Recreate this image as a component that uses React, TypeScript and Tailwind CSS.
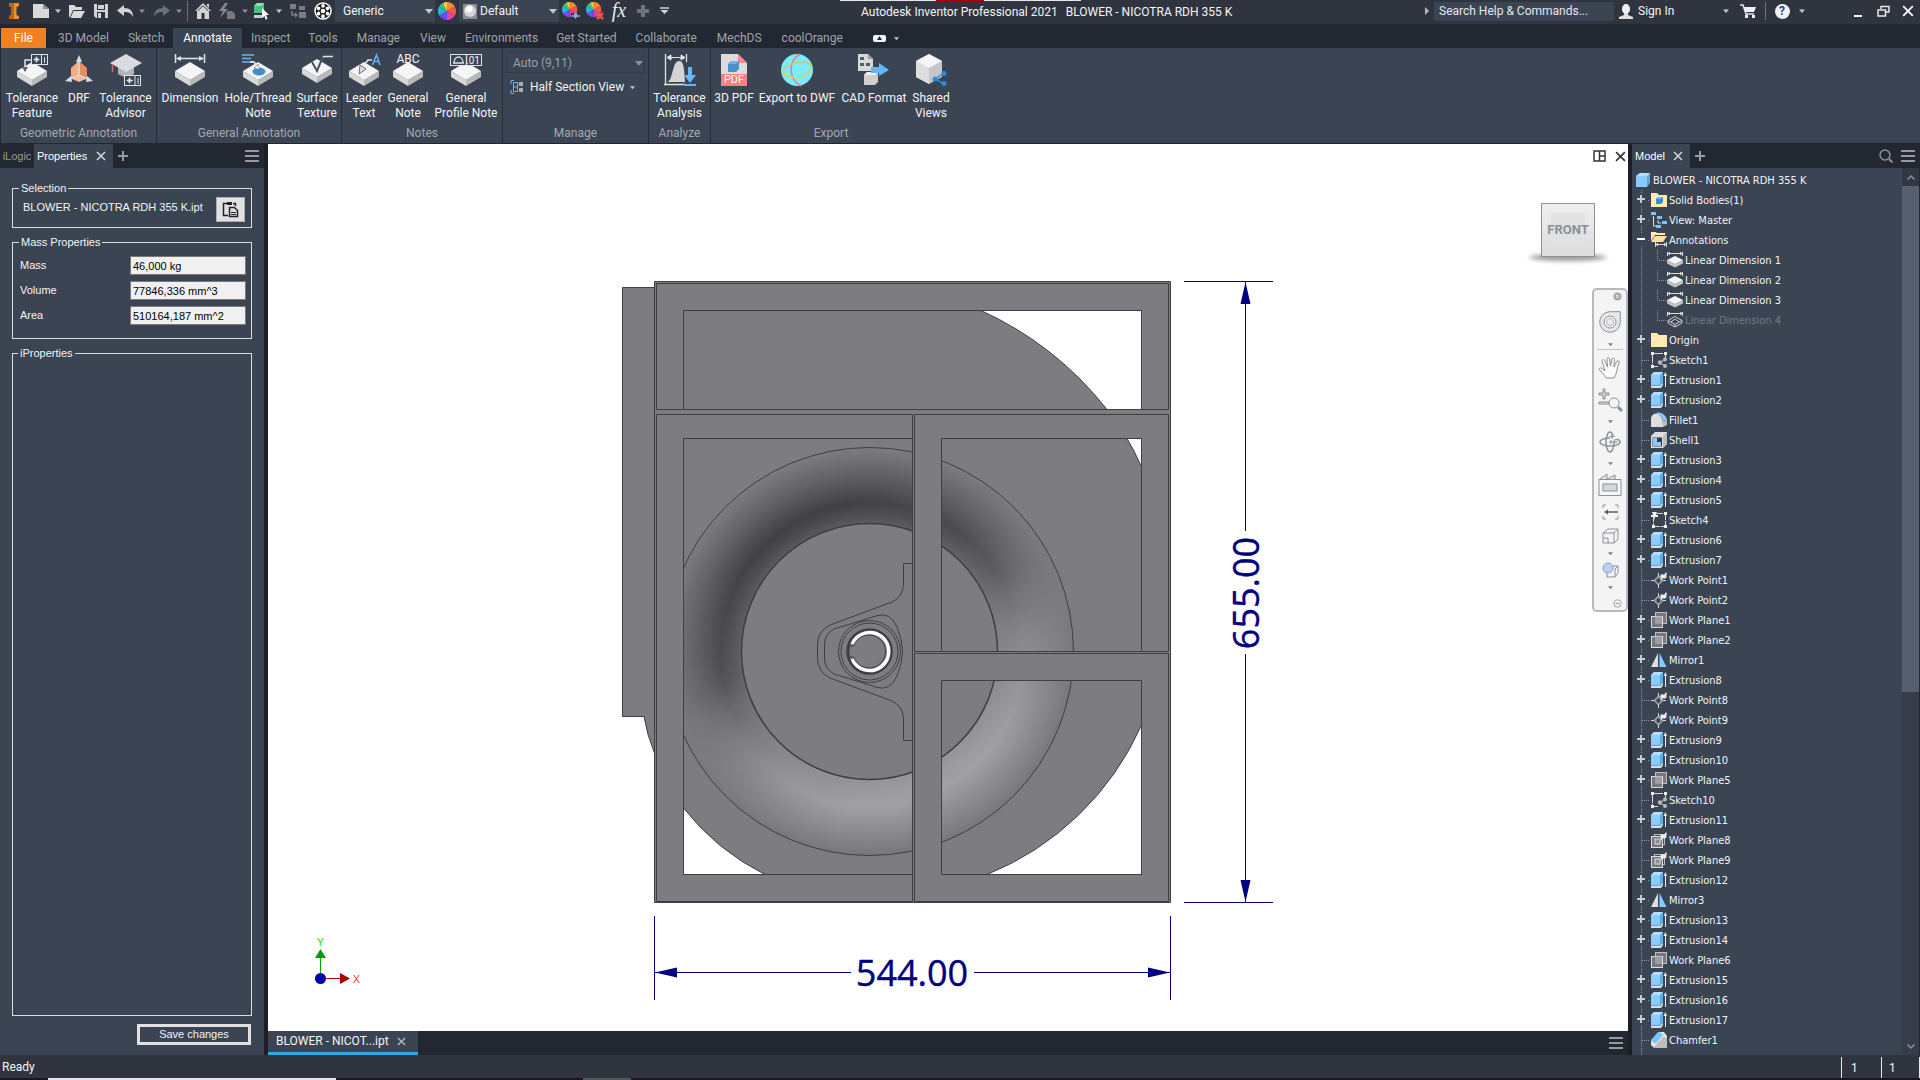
import type { ReactNode } from "react";

const Svg = ({ w = 16, h = 16, children }: { w?: number; h?: number; children: ReactNode }) => (
  <svg width={w} height={h} viewBox={`0 0 ${w} ${h}`} fill="none" className="block shrink-0" aria-hidden="true">
    {children}
  </svg>
);

const Caret = ({ size = 6, color = "#c3c8d0" }: { size?: number; color?: string }) => (
  <svg width={size} height={size} viewBox="0 0 6 6" className="block shrink-0" aria-hidden="true">
    <path d="M0 1.5H6L3 5Z" fill={color} />
  </svg>
);

const Burger = () => (
  <Svg w={14} h={12}>
    <path d="M0 1H14M0 6H14M0 11H14" stroke="#9a9a9e" strokeWidth="2" />
  </Svg>
);

const Cross = ({ color = "#d5d8dc", s = 10 }: { color?: string; s?: number }) => (
  <svg width={s} height={s} viewBox="0 0 10 10" className="block" aria-hidden="true">
    <path d="M1 1L9 9M9 1L1 9" stroke={color} strokeWidth="1.5" />
  </svg>
);

const Plus = ({ color = "#9a9a9e" }: { color?: string }) => (
  <Svg w={10} h={10}>
    <path d="M5 0V10M0 5H10" stroke={color} strokeWidth="2" />
  </Svg>
);

/* ---------- title bar icons ---------- */

const wheelSlices = (
  <>
    <path d="M9 9V0A9 9 0 0 1 16.8 4.5Z" fill="#ff8a2b" />
    <path d="M9 9L16.8 4.5A9 9 0 0 1 16.8 13.5Z" fill="#f2564f" />
    <path d="M9 9L16.8 13.5A9 9 0 0 1 9 18Z" fill="#e23fa0" />
    <path d="M9 9V18A9 9 0 0 1 1.2 13.5Z" fill="#6a4df0" />
    <path d="M9 9L1.2 13.5A9 9 0 0 1 1.2 4.5Z" fill="#2bb0d8" />
    <path d="M9 9L1.2 4.5A9 9 0 0 1 5 1Z" fill="#38c878" />
    <path d="M9 9L5 1A9 9 0 0 1 9 0Z" fill="#ffd23c" />
  </>
);

const titleIcons: Record<string, ReactNode> = {
  logo: (
    <Svg w={12} h={16}>
      <path d="M1 0H11V3L8.5 4V12L11 13V16H1V13L3.5 12V4L1 3Z" fill="#e8912d" />
      <path d="M1 0H6V16H1V13L3.5 12V4L1 3Z" fill="#b9681a" />
    </Svg>
  ),
  new: (
    <Svg>
      <path d="M0 1H10L16 6V15H0Z" fill="#d9d9d9" />
      <path d="M10 1V6H16Z" fill="#8d9097" />
    </Svg>
  ),
  open: (
    <Svg w={17}>
      <path d="M1 2H6L8 4H14V7H5L2 14H1Z" fill="#d9d9d9" />
      <path d="M5.500 8H17L13 15H2.500Z" fill="#d9d9d9" />
    </Svg>
  ),
  save: (
    <Svg w={14}>
      <path d="M0 1H14V15H2L0 13Z" fill="#d0d2d5" />
      <path d="M3 1H11V7H3ZM3 9H11V15H3Z" fill="#2f343f" />
      <path d="M4 2H10V6H4ZM4 10H7V15H4Z" fill="#d0d2d5" />
    </Svg>
  ),
  undo: (
    <Svg w={17}>
      <path d="M7 2V5C13 5 16 8 16 14C14 10 12 9 7 9V13L0 7.500Z" fill="#d4d4d4" />
    </Svg>
  ),
  redo: (
    <Svg w={17}>
      <path d="M10 2V5C4 5 1 8 1 14C3 10 5 9 10 9V13L17 7.500Z" fill="#6c7077" />
    </Svg>
  ),
  home: (
    <Svg>
      <path d="M8 0L16 8H14V16H9.500V10H6.500V16H2V8H0Z" fill="#d4d4d4" />
      <path d="M12 1H14V5L12 3Z" fill="#d4d4d4" />
      <path d="M2.500 8L8 2.800L13.500 8" stroke="#2f343f" />
    </Svg>
  ),
  bolt: (
    <Svg w={17}>
      <path d="M6 0L0 8H4L1 15L9 6H5L9 0Z" fill="#85888e" />
      <path d="M8 8H13L16 11V16H8Z" fill="#777a80" />
    </Svg>
  ),
  pick: (
    <Svg w={16} h={18}>
      <path d="M0 4L3 1H10V8L8 11H0Z" fill="#4cbf7c" />
      <path d="M0 4L3 1H10L8 4Z" fill="#8be0ad" />
      <path d="M0 13H8L10 11V14L8 16H0Z" fill="#c9ccd0" />
      <path d="M8 6L15 13H12L13.500 17L11.500 17.500L10.500 14L8 16Z" fill="#fff" />
    </Svg>
  ),
  link: (
    <Svg w={17}>
      <path d="M1 1H7V6H1ZM10 3H16V7H10ZM10 9H17V15H10Z" fill="#7b7e85" />
      <path d="M3 8V12H8M6 10L8 12L6 14" stroke="#7b7e85" strokeWidth="1.500" />
    </Svg>
  ),
  ball: (
    <Svg w={18} h={18}>
      <circle cx="9" cy="9" r="8" fill="#111" stroke="#fff" strokeWidth="1.500" />
      <circle cx="9" cy="9" r="2.300" fill="#fff" />
      {[0, 60, 120, 180, 240, 300].map((a) => (
        <circle key={a} cx="9" cy="3.800" r="1.900" fill="#fff" transform={`rotate(${a} 9 9)`} />
      ))}
    </Svg>
  ),
  wheel: (
    <Svg w={18} h={18}>
      {wheelSlices}
    </Svg>
  ),
  wheelAdd: (
    <Svg w={18} h={18}>
      <g transform="scale(.85)">{wheelSlices}</g>
      <path d="M9 11H18V18H9Z" fill="#2f343f" />
      <path d="M9.500 14H18" stroke="#d9e6f2" />
      <path d="M12 11H15V15L13.500 17L12 15Z" fill="#63b8f5" />
    </Svg>
  ),
  wheelClear: (
    <Svg w={18} h={18}>
      <g transform="scale(.85)">{wheelSlices}</g>
      <path d="M11 11L17 17M17 11L11 17" stroke="#f05252" strokeWidth="2.500" />
    </Svg>
  ),
  plus: (
    <Svg w={12} h={12}>
      <path d="M6 0V12M0 6H12" stroke="#6f737b" strokeWidth="4" />
    </Svg>
  ),
  more: (
    <Svg w={9} h={8}>
      <path d="M0 1H9" stroke="#d0d3d8" strokeWidth="1.500" />
      <path d="M0.500 3H8.500L4.500 7Z" fill="#d0d3d8" />
    </Svg>
  ),
};

const IconButton = ({ label, className, children }: { label: string; className: string; children: ReactNode }) => (
  <button type="button" aria-label={label} className={`flex h-full shrink-0 items-center justify-center ${className}`}>
    {children}
  </button>
);

const TitleSelect = ({ label, value, icon }: { label: string; value: string; icon?: ReactNode }) => (
  <div className="relative flex h-[22px] w-[100px] shrink-0 items-center bg-[#3b4453]">
    {icon && <span className="ml-1">{icon}</span>}
    <select aria-label={label} className={`h-full w-full min-w-0 appearance-none bg-transparent text-[12px] text-gray-100 ${icon ? "pl-[3px]" : "pl-2"}`}>
      <option>{value}</option>
    </select>
    <span className="pointer-events-none absolute right-[2px]">
      <Caret size={8} />
    </span>
  </div>
);

const TitleBar = () => (
  <header className="flex h-6 items-start bg-[#2f343f]">
    <div className="flex h-[22px] shrink-0 items-center">
      <IconButton label="Application menu" className="w-7">{titleIcons.logo}</IconButton>
      <IconButton label="New" className="w-[26px]">{titleIcons.new}</IconButton>
      <IconButton label="New options" className="w-2"><Caret /></IconButton>
      <IconButton label="Open" className="w-7">{titleIcons.open}</IconButton>
      <IconButton label="Save" className="w-[22px]">{titleIcons.save}</IconButton>
      <IconButton label="Undo" className="w-[26px]">{titleIcons.undo}</IconButton>
      <IconButton label="Undo options" className="w-2"><Caret color="#8b9098" /></IconButton>
      <IconButton label="Redo" className="w-[30px]">{titleIcons.redo}</IconButton>
      <IconButton label="Redo options" className="w-[6px]"><Caret color="#8b9098" /></IconButton>
      <div className="mx-[5px] h-5 w-px bg-[#6b7079]" />
      <IconButton label="Home" className="w-5">{titleIcons.home}</IconButton>
      <IconButton label="Update" className="w-7">{titleIcons.bolt}</IconButton>
      <IconButton label="Update options" className="w-2"><Caret color="#8b9098" /></IconButton>
      <IconButton label="Select" className="w-[26px]">{titleIcons.pick}</IconButton>
      <IconButton label="Select options" className="w-2"><Caret /></IconButton>
      <IconButton label="Return" className="w-7">{titleIcons.link}</IconButton>
      <IconButton label="Material browser" className="w-6">{titleIcons.ball}</IconButton>
      <TitleSelect label="Material" value="Generic" />
      <IconButton label="Appearance browser" className="w-6">{titleIcons.wheel}</IconButton>
      <TitleSelect
        label="Appearance"
        value="Default"
        icon={
          <Svg w={14} h={15}>
            <rect width="14" height="15" fill="#8b8e93" />
            <circle cx="7" cy="7" r="6" fill="#d5d5d5" />
            <circle cx="6" cy="5" r="3.500" fill="#fafafa" />
          </Svg>
        }
      />
      <IconButton label="Adjust appearance" className="w-6">{titleIcons.wheelAdd}</IconButton>
      <IconButton label="Clear appearance" className="w-6">{titleIcons.wheelClear}</IconButton>
      <IconButton label="Parameters" className="w-6 pb-[2px] font-['Liberation_Serif',serif] text-[20px] leading-none text-gray-200 italic">fx</IconButton>
      <IconButton label="Add command" className="w-6">{titleIcons.plus}</IconButton>
      <IconButton label="Customize toolbar" className="w-[18px]">{titleIcons.more}</IconButton>
    </div>
    <div className="flex min-w-0 flex-1 flex-col">
      <div className="ml-[167px] flex h-px w-[241px] bg-gray-200">
        <span className="ml-24 w-12 bg-[#b50000]" />
      </div>
      <h1 className="ml-[188px] flex h-[22px] items-center gap-[8px] text-[12px] whitespace-nowrap text-gray-100">
        <span>Autodesk Inventor Professional 2021</span>
        <span>BLOWER - NICOTRA RDH 355 K</span>
      </h1>
    </div>
    <div className="flex h-[22px] shrink-0 items-center">
      <IconButton label="Expand search" className="w-[14px]">
        <Svg w={4} h={8}><path d="M0 0L4 4L0 8Z" fill="#b5bac2" /></Svg>
      </IconButton>
      <input aria-label="Search" placeholder="Search Help &amp; Commands..." className="h-[19px] w-[180px] bg-[#3b4453] px-[5px] text-[12px] text-gray-100 placeholder:text-gray-200" />
      <button type="button" className="flex h-full items-center text-[12px] text-gray-100">
        <span className="mx-[5px]">
          <Svg w={14} h={15}>
            <ellipse cx="7" cy="5" rx="4" ry="5" fill="#f0f0f0" />
            <path d="M5 9H9V11L14 13V15H0V13L5 11Z" fill="#e0e0e0" />
          </Svg>
        </span>
        <span className="w-[85px] text-left">Sign In</span>
        <span className="mr-[2px]"><Caret /></span>
      </button>
      <IconButton label="App store" className="w-[34px]">
        <Svg w={17} h={15}>
          <path d="M0 1H3L6 10H14" stroke="#dfe3f5" strokeWidth="1.500" />
          <path d="M4 3H16L14 8H5.500Z" fill="#eceffc" />
          <path d="M5 11H8V14H5ZM12 11H15V14H12Z" fill="#eceffc" />
        </Svg>
      </IconButton>
      <div className="h-[18px] w-px bg-[#6b7079]" />
      <IconButton label="Help" className="w-8">
        <span className="flex size-[15px] items-center justify-center rounded-full bg-gray-100 text-[12px] font-bold text-[#1d3f9c]">?</span>
      </IconButton>
      <IconButton label="Help options" className="mr-10 w-2"><Caret /></IconButton>
      <IconButton label="Minimize" className="w-6">
        <Svg w={8} h={12}><path d="M0 11H8" stroke="#fff" strokeWidth="2" /></Svg>
      </IconButton>
      <IconButton label="Restore" className="w-[26px]">
        <Svg w={13} h={12}>
          <path d="M4 4V1.500H12V7H9M1 5H8.500V11H1Z" stroke="#e8e8e8" strokeWidth="1.500" />
        </Svg>
      </IconButton>
      <IconButton label="Close" className="w-6"><Cross color="#fff" s={12} /></IconButton>
    </div>
  </header>
);

/* ---------- ribbon ---------- */

const tabs: [string, string][] = [
  ["3D Model", "px-[10px]"],
  ["Sketch", "px-[9px]"],
  ["Annotate", "px-[10px] bg-[#3b4453] text-white"],
  ["Inspect", "px-[9px]"],
  ["Tools", "px-[9px]"],
  ["Manage", "px-[10px]"],
  ["View", "px-[10px]"],
  ["Environments", "px-[9px]"],
  ["Get Started", "px-[9px]"],
  ["Collaborate", "px-[10px]"],
  ["MechDS", "px-[10px]"],
  ["coolOrange", "px-[10px]"],
];

const RibbonTabs = () => (
  <nav className="flex h-6 items-end bg-[#222831] text-[12px] text-[#a0a4aa]">
    <button type="button" className="mr-[2px] ml-px h-5 w-[45px] bg-[#ef8122] text-white">File</button>
    {tabs.map(([name, style]) => (
      <button key={name} type="button" className={`h-5 whitespace-nowrap ${style}`}>
        {name}
      </button>
    ))}
    <button type="button" aria-label="Ribbon display" className="ml-5 flex h-5 items-center gap-2">
      <span className="flex h-[7px] w-[13px] items-center justify-center rounded-[2px] bg-gray-100">
        <Svg w={5} h={4}><path d="M0 4H5L2.500 0Z" fill="#222831" /></Svg>
      </span>
      <Caret size={5} />
    </button>
  </nav>
);

const Slab = () => (
  <>
    <path d="M1 17L16 26V32L1 23Z" fill="#d8d8d8" />
    <path d="M31 17L16 26V32L31 23Z" fill="#b9b9b9" />
    <path d="M16 8L31 17L16 26L1 17Z" fill="#f5f5f5" />
  </>
);

const ribbonIcons: Record<string, ReactNode> = {
  feature: (
    <>
      <Slab />
      <path d="M9 16V6H15" stroke="#dfe3e8" strokeWidth="1.500" />
      <path d="M6 13H12L9 18Z" fill="#5b6069" />
      <rect x="15.500" y=".5" width="16" height="10" fill="#3b4453" stroke="#dfe3e8" />
      <path d="M25.500 1V10M28.500 3V9M17.500 5.500H23.500M20.500 2.500V8.500" stroke="#dfe3e8" />
      <circle cx="20.500" cy="5.500" r="1.700" stroke="#dfe3e8" />
    </>
  ),
  drf: (
    <>
      <path d="M8 14L16 7L24 14V24L16 20L8 24Z" fill="#e98e5e" />
      <path d="M16 7V20L8 24V14Z" fill="#f9ad7f" />
      <path d="M9 25L16 21L23 25L16 28Z" fill="#f8ba91" />
      <path d="M16 5V21L5 26M16 21L27 26" stroke="#d9dde2" strokeWidth="1.500" />
      <path d="M13 8H19L16 1ZM8 22L2 27L9 28ZM24 22L30 27L23 28Z" fill="#d9dde2" />
    </>
  ),
  advisor: (
    <>
      <path d="M8 12V20L16 24L24 20V12Z" fill="#b0b3b8" />
      <path d="M16 0L32 9L16 18L0 9Z" fill="#d9dbde" />
      <path d="M2.500 11V18" stroke="#e56a6a" strokeWidth="1.500" />
      <rect x="14.500" y="21.500" width="16" height="10" fill="#3b4453" stroke="#dfe3e8" />
      <path d="M25 22V31M28 24V30M16.500 26.500H23M19.500 23.500V29.500" stroke="#dfe3e8" />
      <circle cx="19.500" cy="26.500" r="1.700" stroke="#dfe3e8" />
    </>
  ),
  dimension: (
    <>
      <Slab />
      <path d="M1.500 0V9M30.500 0V9M3 4.500H29" stroke="#dfe3e8" strokeWidth="1.500" />
      <path d="M2 4.500L7 2V7ZM30 4.500L25 2V7Z" fill="#dfe3e8" />
    </>
  ),
  hole: (
    <>
      <Slab />
      <ellipse cx="17" cy="17.500" rx="6.500" ry="4" fill="#3d8ed0" />
      <path d="M0 1H12M0 4.500H9M0 8H12" stroke="#65b5f3" strokeWidth="1.500" />
      <path d="M8 8H12L17 14" stroke="#eef1f4" strokeWidth="1.500" />
      <path d="M18 16L12 14L16 10Z" fill="#eef1f4" stroke="#444" strokeWidth=".5" />
    </>
  ),
  surface: (
    <>
      <g transform="translate(0 -3)"><Slab /></g>
      <path d="M11 8L16 17L22 2.500H31" stroke="#4b505a" strokeWidth="2" />
      <path d="M22 3L23 2.500H32" stroke="#dfe3e8" strokeWidth="1.500" />
    </>
  ),
  leader: (
    <>
      <Slab />
      <path d="M12 17L20 6H24" stroke="#dfe3e8" strokeWidth="1.500" />
      <path d="M11 20L12 11L18 15Z" fill="#d7d9dc" stroke="#555" strokeWidth=".8" />
      <path d="M24.500 11L28.500 1L32 11M26 7.500H31" stroke="#65b5f3" strokeWidth="1.500" />
    </>
  ),
  abc: <Slab />,
  profile: (
    <>
      <Slab />
      <rect x=".5" y=".5" width="31" height="11" fill="#3b4453" stroke="#dfe3e8" />
      <path d="M16.500 1V11M3 9H14M4 9C4 1 13 1 13 9" stroke="#dfe3e8" strokeWidth="1.300" />
    </>
  ),
  analysis: (
    <>
      <path d="M1.500 0V30M22.500 0V8M0 30.500H22" stroke="#dfe3e8" strokeWidth="1.300" />
      <path d="M3 3.500H21M3 3.500L7 1V6ZM21 3.500L17 1V6Z" fill="#dfe3e8" stroke="#dfe3e8" />
      <path d="M3 28C9 28 8 7 15 7C20 7 20 14 21 28Z" fill="#d4d4d6" />
      <path d="M24 13H28V21H32L26 29L20 21H24ZM20 30H32V32H20Z" fill="#62b8f8" />
    </>
  ),
  pdf: (
    <>
      <path d="M3 0H20L29 9V20H3Z" fill="#dcdcdc" />
      <path d="M20 0L29 9H20Z" fill="#f58a8d" />
      <path d="M10 10L13 7H21V15L18 18H10Z" fill="#4a90cc" />
      <path d="M10 10L13 7H21L18 10Z" fill="#6fb4ea" />
      <path d="M3 20H29V32H3Z" fill="#f78084" />
    </>
  ),
  dwf: (
    <>
      <circle cx="16" cy="16" r="16" fill="#7cebfb" />
      <path d="M19 0C7 7 7 25 20 32" stroke="#ef7c77" strokeWidth="1.500" />
      <path d="M1 18C8 7 24 5 31 12" stroke="#c9c97f" strokeWidth="1.500" />
      <path d="M1 17C8 26 25 27 31 13" stroke="#eccb4c" strokeWidth="1.500" />
    </>
  ),
  cad: (
    <>
      <path d="M0 0H10L15 5V17H0Z" fill="#d9d9d9" />
      <path d="M10 0V5H15Z" fill="#9b9ea3" />
      <path d="M2 3H6V6H2ZM2 9H6V12H2ZM8 9H12V12H8Z" fill="#555a63" />
      <path d="M6 21L9 18H20V28L17 31H6Z" fill="#cfcfcf" />
      <path d="M6 21L9 18H20L17 21Z" fill="#f0f0f0" />
      <path d="M13 13H21V9L31 16L21 22V19H13Z" fill="#62b8f8" />
    </>
  ),
  shared: (
    <>
      <path d="M1 7L14 0L27 7V23L14 30L1 23Z" fill="#c6c6c6" />
      <path d="M1 7L14 14V30L1 23Z" fill="#dedede" />
      <path d="M1 7L14 0L27 7L14 14Z" fill="#f5f5f5" />
      <path d="M29 19L20 25L29 30" stroke="#2a8ae2" strokeWidth="1.500" />
      <circle cx="29" cy="19.500" r="2.500" fill="#2a8ae2" />
      <circle cx="20" cy="25" r="2.500" fill="#2a8ae2" />
      <circle cx="29" cy="29.500" r="2.500" fill="#2a8ae2" />
    </>
  ),
};

type Tool = { icon: string; lines: string[]; w: string };

const ToolButton = ({ icon, lines, w }: Tool) => (
  <button type="button" className={`flex shrink-0 flex-col items-center text-[12px] leading-[15px] whitespace-nowrap text-gray-100 ${w}`}>
    <span className="relative mb-[5px]">
      <svg width="32" height="32" viewBox="0 0 32 32" fill="none" className="block overflow-visible" aria-hidden="true">{ribbonIcons[icon]}</svg>
      {icon === "abc" && <span className="absolute inset-x-0 -top-px text-center text-[12px] leading-[13px]">ABC</span>}
      {icon === "profile" && <span className="absolute top-px right-[2px] text-[10px] leading-[11px]">.01</span>}
      {icon === "pdf" && <span className="absolute inset-x-0 bottom-0 text-center text-[11px] leading-[12px]">PDF</span>}
    </span>
    {lines.map((l) => <span key={l}>{l}</span>)}
  </button>
);

const Group = ({ title, children }: { title: string; children: ReactNode }) => (
  <section aria-label={title} className="flex shrink-0 flex-col border-r border-[#262c37]">
    <div className="flex h-[76px] pt-[6px]">{children}</div>
    <div className="text-center text-[12px] leading-[18px] text-[#a3a8b0]">{title}</div>
  </section>
);

const Ribbon = () => (
  <div className="flex h-24 border-b border-l border-[#222831] bg-[#3b4453]">
    <Group title="Geometric Annotation">
      <ToolButton icon="feature" lines={["Tolerance", "Feature"]} w="w-[62px]" />
      <ToolButton icon="drf" lines={["DRF"]} w="w-8" />
      <ToolButton icon="advisor" lines={["Tolerance", "Advisor"]} w="w-[61px]" />
    </Group>
    <Group title="General Annotation">
      <ToolButton icon="dimension" lines={["Dimension"]} w="w-[66px]" />
      <ToolButton icon="hole" lines={["Hole/Thread", "Note"]} w="w-[70px]" />
      <ToolButton icon="surface" lines={["Surface", "Texture"]} w="w-12" />
    </Group>
    <Group title="Notes">
      <ToolButton icon="leader" lines={["Leader", "Text"]} w="w-11" />
      <ToolButton icon="abc" lines={["General", "Note"]} w="w-11" />
      <ToolButton icon="profile" lines={["General", "Profile Note"]} w="w-[72px]" />
    </Group>
    <Group title="Manage">
      <div className="flex w-[145px] flex-col px-[3px] -mt-[2px]">
        <div className="relative flex h-[21px] items-center border border-[#323945] bg-[#3c4453]">
          <select aria-label="Tolerance range" className="h-full w-full appearance-none bg-transparent pl-[6px] text-[12px] text-[#9aa0a9]">
            <option>Auto (9,11)</option>
          </select>
          <span className="pointer-events-none absolute right-px"><Caret size={8} color="#8b919b" /></span>
        </div>
        <button type="button" className="mt-[3px] flex h-[22px] items-center gap-[6px] pl-1 text-[12px] text-gray-100">
          <Svg w={14} h={14}>
            <path d="M4 .5H1V4M1 10V13.500H4" stroke="#65b5f3" />
            <path d="M3.500 2.500H7.500V11.500H3.500ZM3.500 7H7.500" stroke="#65b5f3" />
            <path d="M9 2H13V6H9ZM9 8H13V12H9Z" fill="#a9adb4" />
          </Svg>
          <span>Half Section View</span>
          <Caret size={5} />
        </button>
      </div>
    </Group>
    <Group title="Analyze">
      <ToolButton icon="analysis" lines={["Tolerance", "Analysis"]} w="w-[61px]" />
    </Group>
    <section aria-label="Export" className="flex flex-col">
      <div className="flex h-[76px] pt-[6px]">
        <ToolButton icon="pdf" lines={["3D PDF"]} w="w-[46px]" />
        <ToolButton icon="dwf" lines={["Export to DWF"]} w="w-20" />
        <ToolButton icon="cad" lines={["CAD Format"]} w="w-[74px]" />
        <ToolButton icon="shared" lines={["Shared", "Views"]} w="w-10" />
      </div>
      <div className="text-center text-[12px] leading-[18px] text-[#a3a8b0]">Export</div>
    </section>
  </div>
);

/* ---------- properties panel ---------- */

const massProps = [
  { id: "mass", label: "Mass", value: "46,000 kg" },
  { id: "volume", label: "Volume", value: "77846,336 mm^3" },
  { id: "area", label: "Area", value: "510164,187 mm^2" },
];

const PropertiesPanel = () => (
  <aside className="flex w-[268px] shrink-0 flex-col border-r-4 border-[#1b2028] bg-[#3b4453] font-['Liberation_Sans',sans-serif] text-[11px] text-gray-100">
    <div className="flex h-6 items-center bg-[#222831]">
      <button type="button" className="w-[34px] text-[#9a9a94]">iLogic</button>
      <div className="flex h-full w-[79px] items-center justify-between bg-[#3b4453] pr-[7px] pl-[3px]">
        <button type="button" className="text-white">Properties</button>
        <button type="button" aria-label="Close Properties"><Cross /></button>
      </div>
      <button type="button" aria-label="Add panel" className="ml-[5px]"><Plus /></button>
      <button type="button" aria-label="Panel menu" className="mr-[5px] ml-auto"><Burger /></button>
    </div>
    <div className="flex flex-1 flex-col gap-[7px] px-3 pt-[13px] pb-[10px]">
      <fieldset className="h-[47px] border border-[#dcdcdc]">
        <legend className="ml-[6px] px-[2px] leading-[14px]">Selection</legend>
        <div className="flex items-start justify-between pt-px pr-[6px] pl-[10px]">
          <span className="leading-[22px]">BLOWER - NICOTRA RDH 355 K.ipt</span>
          <button type="button" aria-label="Paste" className="mt-px flex h-[25px] w-[29px] items-center justify-center border border-[#adadad] bg-[#e1e1e1]">
            <Svg w={17} h={17}>
              <path d="M5 2.500H1.500V14.500H6M11 2.500H13.500V5" stroke="#222" strokeWidth="1.500" />
              <path d="M5 1H10V4H5Z" fill="#222" />
              <path d="M7.500 6.500H12.500L15.500 9.500V15.500H7.500Z" stroke="#222" strokeWidth="1.500" />
              <path d="M9 11.500H14M9 13.500H14" stroke="#222" />
            </Svg>
          </button>
        </div>
      </fieldset>
      <fieldset className="h-[104px] border border-[#dcdcdc]">
        <legend className="ml-[6px] px-[2px] leading-[14px]">Mass Properties</legend>
        <div className="flex flex-col gap-[6px] pt-[7px] pr-[5px] pl-[7px]">
          {massProps.map((p) => (
            <div key={p.id} className="flex items-center justify-between">
              <label htmlFor={p.id}>{p.label}</label>
              <input id={p.id} readOnly defaultValue={p.value} className="h-[19px] w-[116px] border border-[#7a7a7a] bg-[#f0f0f0] px-[2px] text-black" />
            </div>
          ))}
        </div>
      </fieldset>
      <fieldset className="flex-1 border border-[#dcdcdc]">
        <legend className="ml-[5px] px-[2px] leading-[14px]">iProperties</legend>
      </fieldset>
      <button type="button" className="mt-px mr-px h-[21px] w-[114px] self-end border-[3px] border-[#e1e1e1] leading-none">Save changes</button>
    </div>
  </aside>
);

/* ---------- viewport ---------- */

const Drawing = () => {
  const edge = "#3f3f41";
  const body = "#7d7c80";
  return (
    <svg viewBox="268 144 1360 887" className="block h-full w-full" role="img" aria-label="Front view of blower">
      <defs>
        <radialGradient id="dark" gradientUnits="userSpaceOnUse" cx="869.5" cy="651.5" r="204">
          <stop offset=".62" stopColor="#5a5a62" />
          <stop offset=".67" stopColor="#4c4c50" />
          <stop offset=".73" stopColor="#414143" />
          <stop offset=".86" stopColor="#606062" />
          <stop offset="1" stopColor={body} />
        </radialGradient>
        <radialGradient id="light" gradientUnits="userSpaceOnUse" cx="869.5" cy="651.5" r="204">
          <stop offset=".62" stopColor="#96969a" />
          <stop offset=".76" stopColor="#a1a1a5" />
          <stop offset=".88" stopColor="#8c8c8f" />
          <stop offset="1" stopColor="#78787a" />
        </radialGradient>
        <linearGradient id="fadeDark" gradientUnits="userSpaceOnUse" x1="785" y1="505" x2="900" y2="730">
          <stop offset=".1" stopColor="#fff" />
          <stop offset=".45" stopColor="#c4c4c4" />
          <stop offset=".7" stopColor="#666" />
          <stop offset="1" stopColor="#000" />
        </linearGradient>
        <linearGradient id="fadeLight" gradientUnits="userSpaceOnUse" x1="850" y1="630" x2="920" y2="800">
          <stop offset="0" stopColor="#000" />
          <stop offset=".9" stopColor="#fff" />
        </linearGradient>
        <mask id="mDark"><rect x="600" y="400" width="560" height="500" fill="url(#fadeDark)" /></mask>
        <mask id="mLight"><rect x="600" y="400" width="560" height="500" fill="url(#fadeLight)" /></mask>
        <clipPath id="windows">
          <path d="M683 438H913V874H683ZM941 438H1141V652H941ZM941 680H1141V874H941Z" />
        </clipPath>
      </defs>

      <path d="M654.500 281H1170V903H654.500V753Q647 735 644 717H622.500V287.500H654.500Z" fill={body} />
      <g fill="#fff" stroke={edge}>
        <path d="M981 310.500A340 340 0 0 1 1107 409.500H1141.500V310.500Z" />
        <path d="M1127 438.500L1134 451L1141.500 467V438.500Z" />
        <path d="M683.500 808A240 240 0 0 0 765 874.500H683.500Z" />
        <path d="M1141.500 725A286 286 0 0 1 987 874.500H1141.500Z" />
      </g>
      <g clipPath="url(#windows)">
        <circle cx="869.500" cy="651.500" r="204" fill="url(#dark)" mask="url(#mDark)" />
        <circle cx="869.500" cy="651.500" r="204" fill="url(#light)" mask="url(#mLight)" />
        <circle cx="869.500" cy="651.500" r="204" fill="none" stroke={edge} />
        <circle cx="869.500" cy="651.500" r="128" fill={body} stroke={edge} strokeWidth="1.500" />
      </g>
      <g fill="none" stroke={edge}>
        <path d="M913 563.500H903.500V584Q903 597 892 602L830 625Q817.500 631 817.500 645V658Q817.500 672 830 678L892 701Q903 706 903.500 719V740.500H913" />
        <path d="M824.500 645Q824.500 634 834 629L876 616Q890 611 897 627Q902.500 640 902.500 651.500T897 676Q890 692 876 687L834 674Q824.500 669 824.500 658Z" />
        <circle cx="869.500" cy="651.500" r="31" />
        <circle cx="869.500" cy="651.500" r="28.500" />
        <circle cx="869.500" cy="651.500" r="22" strokeWidth="2.500" />
      </g>
      <path d="M852.300 644A19 19 0 1 1 852.300 659" fill="none" stroke="#fff" strokeWidth="3.500" />
      <path d="M853.500 646A16.500 16.500 0 1 1 853.500 657H849V646Z" fill="none" stroke={edge} />

      <g fill="none" stroke={edge}>
        <path d="M654.500 287.500H622.500V716.500H644Q647 735 654.500 753" />
        <path d="M654.500 281.500H1170.500V902.500H654.500Z" />
        <path d="M656.500 283.500H1168.500V409.500H656.500ZM683.500 409V310.500H1141.500V409" />
        <path d="M912.500 414.500H656.500V901.500H912.500M912.500 438.500H683.500V874.500H912.500" />
        <path d="M912.500 414.500V901.500M914.500 414.500H1168.500V651.500H914.500ZM941.500 651V438.500H1141.500V651" />
        <path d="M914.500 653.500H1168.500V901.500H914.500ZM941.500 680.500H1141.500V874.500H941.500Z" />
      </g>

      <g stroke="#000080" fill="#000080">
        <path d="M654.500 916V1000M1170.500 916V1000M655 972.500H851M974 972.500H1170M1184 281.500H1273M1184 902.500H1273M1245.500 282V531M1245.500 654V903" />
        <path d="M655 972.500L677 967.500V977.500ZM1170 972.500L1148 967.500V977.500ZM1245.500 282L1240.500 304H1250.500ZM1245.500 902L1240.500 880H1250.500Z" stroke="none" />
      </g>
      <g fill="#000080" stroke="#000080" strokeWidth=".4" fontFamily="Open Sans, sans-serif" fontSize="36" textAnchor="middle">
        <text x="912" y="986">544.00</text>
        <text transform="translate(1259 593) rotate(-90)">655.00</text>
      </g>

      <path d="M320.500 978V958" stroke="#00b000" />
      <path d="M315 958H326L320.500 949Z" fill="#0a9a0a" />
      <path d="M320 978.500H341" stroke="#b00000" />
      <path d="M340 973V984L350 978.500Z" fill="#a80000" />
      <circle cx="320.500" cy="978.500" r="5.500" fill="#0000a8" />
      <g fontFamily="Liberation Sans, sans-serif" fontSize="11" textAnchor="middle">
        <text x="320.500" y="946" fill="#20e020">Y</text>
        <text x="356.500" y="983" fill="#ff3838">X</text>
      </g>
    </svg>
  );
};

const NavCaret = ({ className, label }: { className: string; label: string }) => (
  <button type="button" aria-label={label} className={`flex w-full items-center justify-center ${className}`}>
    <Caret size={5} color="#7c7f85" />
  </button>
);

const NavItem = ({ className, label, children }: { className: string; label: string; children: ReactNode }) => (
  <button type="button" aria-label={label} className={`flex w-full items-center justify-center ${className}`}>
    {children}
  </button>
);

const NavigationBar = () => {
  const s = "#8d9096";
  return (
    <div className="absolute top-36 right-0 flex h-[324px] w-9 flex-col rounded-[5px] border-2 border-[#b9b9b9] bg-[#f4f4f4]">
      <button type="button" aria-label="Close navigation bar" className="mr-1 flex h-[13px] items-center self-end">
        <Svg w={9} h={9}><circle cx="4.500" cy="4.500" r="4" fill="#a8a8a8" /><path d="M3 3L6 6M6 3L3 6" stroke="#fff" /></Svg>
      </button>
      <NavItem label="Steering wheel" className="h-[38px]">
        <Svg w={22} h={22}>
          <path d="M11 .7H21.300V11A10.300 10.300 0 1 1 11 .7Z" fill="#e6e7ea" stroke={s} />
          <circle cx="11" cy="11" r="6" fill="#f4f4f4" stroke={s} />
          <circle cx="11" cy="11" r="3.500" fill="#ebecef" stroke="#b5b8bd" />
        </Svg>
      </NavItem>
      <NavCaret label="Wheel options" className="h-[6px]" />
      <div className="mx-[3px] my-[2px] h-px shrink-0 bg-[#c4c4c4]" />
      <NavItem label="Pan" className="h-8">
        <Svg w={24} h={24}>
          <path d="M8 22C6 18 3 16 1 13C2 11 4 12 7 15L4 5C4 3 6 3 7 5L9.500 11L9 3C9 1 11.500 1 11.500 3L12.500 10L14 3C14.500 1.500 16.500 2 16.500 3.500L15.800 11L19 5C20 4 21.500 5 21 6.500C19 12 19 18 16 22Z" fill="#fafafa" stroke={s} />
        </Svg>
      </NavItem>
      <NavItem label="Zoom" className="h-8">
        <Svg w={25} h={24}>
          <path d="M1 5H5V1H7V5H11V7H7V11H5V7H1ZM1 14H11V16H1Z" fill="#d3d5d8" stroke={s} />
          <circle cx="16" cy="15" r="5" fill="#f4f7f4" stroke={s} />
          <path d="M20 19L24 23" stroke={s} strokeWidth="3" />
        </Svg>
      </NavItem>
      <NavCaret label="Zoom options" className="h-[10px]" />
      <NavItem label="Orbit" className="h-8">
        <Svg w={22} h={22}>
          <ellipse cx="11" cy="11" rx="10" ry="4" stroke={s} strokeWidth="1.500" />
          <ellipse cx="11" cy="11" rx="4" ry="10" stroke={s} strokeWidth="1.500" />
          <path d="M11 6H20V10H11Z" fill="#f4f4f4" />
          <path d="M13 3V8M10.500 5.500H15.500M10 11H14M12 9V13M15 9L20 8L17 12Z" stroke={s} />
        </Svg>
      </NavItem>
      <NavCaret label="Orbit options" className="h-[10px]" />
      <NavItem label="Look at" className="h-[34px]">
        <Svg w={24} h={24}>
          <path d="M2 6L9 1V6M9 6L17 2V6" fill="#e4e5e7" stroke={s} />
          <rect x="1" y="6.500" width="22" height="16" fill="#f7f7f7" stroke={s} />
          <rect x="5" y="11" width="14" height="7" fill="#d5d7dd" stroke={s} />
        </Svg>
      </NavItem>
      <NavItem label="Previous view" className="h-5">
        <Svg w={17} h={16}>
          <path d="M1 4V1H4M13 1H16V4M16 12V15H13M4 15H1V12" stroke={s} />
          <path d="M5 8H16" stroke="#5b5e63" strokeWidth="1.500" />
          <path d="M2 8L6 5.500V10.500Z" fill="#5b5e63" />
        </Svg>
      </NavItem>
      <NavItem label="View face" className="h-[27px]">
        <Svg w={17} h={16}>
          <path d="M1 5L6 1H16V11L12 15H1ZM1 5H12V15M12 5L16 1" fill="#f3f3f5" stroke={s} />
          <path d="M1 10H6V15" stroke={s} />
        </Svg>
      </NavItem>
      <NavCaret label="View face options" className="h-2" />
      <NavItem label="Visual style" className="h-[26px]">
        <Svg w={17} h={16}>
          <path d="M5 7L9 4H16V11L13 15H5ZM13 15V7L16 4" fill="#f3f3f5" stroke={s} />
          <circle cx="6" cy="6" r="5" fill="#bcd0f0" stroke="#7f9fd0" />
        </Svg>
      </NavItem>
      <NavCaret label="Visual style options" className="h-2" />
      <button type="button" aria-label="Customize navigation bar" className="mt-auto mr-1 mb-[2px] flex h-[10px] items-center self-end">
        <Svg w={9} h={9}><circle cx="4.500" cy="4.500" r="3.800" fill="#eee" stroke="#a8a8a8" /><path d="M2.500 4.500H6.500" stroke="#a0a0a0" /></Svg>
      </button>
    </div>
  );
};

const Viewport = () => (
  <main className="flex min-w-0 flex-1 flex-col bg-white">
    <div className="relative min-h-0 flex-1">
      <Drawing />
      <div className="absolute top-[6px] right-[2px] flex items-center gap-[9px]">
        <button type="button" aria-label="Split view">
          <Svg w={13} h={12}><path d="M1 1H12V11H1ZM6.500 1V11M7 6H12" stroke="#333" strokeWidth="1.500" /></Svg>
        </button>
        <button type="button" aria-label="Close view"><Cross color="#333" s={11} /></button>
      </div>
      <div className="absolute top-[59px] right-[21px] flex flex-col items-center">
        <button type="button" className="relative z-10 flex size-[54px] items-center justify-center border border-[#8f8f8f] bg-linear-to-b from-[#efefef] to-[#dcdcdc]">
          <span className="flex size-[34px] items-center justify-center bg-[#e0e2e4] text-[13px] font-bold text-[#8d9094]">FRONT</span>
        </button>
        <div className="-mt-[3px] h-[7px] w-[78px] rounded-[50%] bg-[#9a9a9a] blur-[2px]" />
      </div>
      <NavigationBar />
    </div>
    <div className="flex h-6 shrink-0 items-center bg-[#222831] text-[12px]">
      <div className="flex h-full w-[150px] items-center gap-2 border-b-[3px] border-[#2fa8e0] bg-[#3b4453] pb-px pl-2 text-gray-100">
        <button type="button">BLOWER - NICOT...ipt</button>
        <button type="button" aria-label="Close document"><Cross color="#b4b8be" s={9} /></button>
      </div>
      <button type="button" aria-label="Document list" className="mr-[5px] ml-auto"><Burger /></button>
    </div>
  </main>
);

/* ---------- model browser ---------- */

const Folder = () => <path d="M0 1H6L8 3H16V15H0Z" fill="#ffeab0" />;
const PinStar = () => <path d="M11 2L13 3L15 0L16 2L15 4L16 5L13 7L12 6L9 9L10 6L9 4Z" fill="#ececec" />;
const Planes = () => (
  <>
    <rect x="4.500" y=".5" width="11" height="11" fill="#76797f" stroke="#bfbfbf" />
    <rect x=".5" y="4.500" width="11" height="11" fill="#83868c" fillOpacity=".8" stroke="#dcdcdc" />
    <rect x="4" y="4.500" width="7" height="7" fill="#a09ca6" />
  </>
);
const Dim = () => <path d="M.5 0V4M15.500 0V4M1 1.500H15M3 0L1 1.500L3 3M13 0L15 1.500L13 3" stroke="#dcdcdc" />;

const treeIcons: Record<string, ReactNode> = {
  bodies: <><Folder /><path d="M5 7L7 5H12V10L10 12H5Z" fill="#2f8fd8" /><path d="M5 7L7 5H12L10 7Z" fill="#6dbdf5" /></>,
  view: <><path d="M0 0H5V3H0ZM6 4H11V7H6ZM11 9H16V12H11ZM5 13H10V16H5Z" fill="#7cc4f8" /><path d="M2.500 4V14H5M7 8V11H10" stroke="#dcdcdc" /></>,
  annotations: <><path d="M0 0H5L6 1H14V3H4L0 9Z" fill="#ffeab0" /><path d="M4 4H16L12 10H0Z" fill="#ffe39a" /><path d="M4.500 10V15M15.500 10V15M5 12.500H15M7 11L5 12.500L7 14M13 11L15 12.500L13 14" stroke="#dcdcdc" /></>,
  dim: <><path d="M0 8L8 12V15.500L0 11.500ZM16 8L8 12V15.500L16 11.500Z" fill="#c2c2c2" /><path d="M8 4L16 8L8 12L0 8Z" fill="#f5f5f5" /><Dim /></>,
  dimOff: <><path d="M8 4.500L15 8.500L8 12.500L1 8.500ZM1 8.500V11L8 15L15 11V8.500M8 12.500V15M4 10L8 7L12 10" stroke="#d0d0d0" /><Dim /></>,
  folder: <Folder />,
  sketch: <><path d="M1.500 2V14M3 1.500H13M14.500 2V6M3 14.500H7" stroke="#dcdcdc" strokeDasharray="9 1" /><path d="M0 0H3V3H0ZM13 0H16V3H13ZM0 13H3V16H0Z" fill="#ececec" /><path d="M9 11L14 7M9 11L14 14" stroke="#b8b8b8" /><circle cx="9" cy="10.500" r="2.200" fill="#b8b8b8" /><circle cx="14" cy="7.500" r="2" fill="#b8b8b8" /><circle cx="14" cy="14" r="2" fill="#b8b8b8" /></>,
  sketchPin: <><path d="M2.500 4V14M6 1.500H14M14.500 2V13M3 14.500H13" stroke="#dcdcdc" strokeDasharray="6 1" /><path d="M1 0H6L5 3H7V5H4L3 8L3 5H0V3H2ZM13 0H16V3H13ZM13 13H16V16H13ZM1 13H4V16H1Z" fill="#f2f2f2" /></>,
  extrusion: <><path d="M0 3L3 0H12V12L9 14H0Z" fill="#5aa9e0" /><path d="M0 3H9V13H0Z" fill="#8ccbff" /><path d="M0 3L3 0H12L9 3Z" fill="#b6dfff" /><path d="M0 14H9L12 11V13L10 16H0Z" fill="#dcdcdc" /><path d="M14.500 15V2" stroke="#ececec" /><path d="M12.500 4L14.500 0L16 4Z" fill="#ececec" /></>,
  fillet: <><path d="M0 15V7C0 3 3 1 7 2C11 4 12 8 12 15Z" fill="#dedede" /><path d="M12 15V9L16 8V13Z" fill="#bcbcbc" /><path d="M4 1C10 -1 15 3 16 8L12 9C11 4 9 2 4 1Z" fill="#8ccbff" /></>,
  shell: <><path d="M0 4L4 0H16V12L12 16H0Z" fill="#dedede" /><path d="M12 4L16 0V12L12 16Z" fill="#bcbcbc" /><path d="M1.500 5.500H11V14.500H1.500Z" fill="#323945" /><path d="M2 6H6V10H10V14H2Z" fill="#8ccbff" /></>,
  point: <><path d="M7.500 1V16M0 8.500H15" stroke="#dcdcdc" /><path d="M7.500 4L12 8.500L7.500 13L3 8.500Z" fill="#7a7d83" stroke="#cfcfcf" /><circle cx="7.500" cy="8.500" r="2" fill="#3b4453" /><PinStar /></>,
  plane: <Planes />,
  planePin: <><rect x="3.500" y="2.500" width="10" height="10" stroke="#bfbfbf" /><rect x=".5" y="4.500" width="11" height="11" fill="#777a80" stroke="#dcdcdc" /><rect x="4" y="7" width="5" height="5" fill="#8d8a93" stroke="#dcdcdc" /><PinStar /></>,
  mirror: <><path d="M7 1V15H0Z" fill="#dedede" /><path d="M8.500 1V15H15.500Z" fill="#8ccbff" /></>,
  chamfer: <><path d="M12 3L16 6V16H4L2 14Z" fill="#bdbdbd" /><path d="M0 9L8 0H13L16 4V6L12 5L4 14L3 16L0 13Z" fill="#e2e2e2" /><path d="M0 8L7 0H9L12 3L5 11H3Z" fill="#7cc4f8" /></>,
};

const rows: [string, string, "+" | "-" | "", boolean?][] = [
  ["bodies", "Solid Bodies(1)", "+"],
  ["view", "View: Master", "+"],
  ["annotations", "Annotations", "-"],
  ["dim", "Linear Dimension 1", "", true],
  ["dim", "Linear Dimension 2", "", true],
  ["dim", "Linear Dimension 3", "", true],
  ["dimOff", "Linear Dimension 4", "", true],
  ["folder", "Origin", "+"],
  ["sketch", "Sketch1", ""],
  ["extrusion", "Extrusion1", "+"],
  ["extrusion", "Extrusion2", "+"],
  ["fillet", "Fillet1", ""],
  ["shell", "Shell1", ""],
  ["extrusion", "Extrusion3", "+"],
  ["extrusion", "Extrusion4", "+"],
  ["extrusion", "Extrusion5", "+"],
  ["sketchPin", "Sketch4", ""],
  ["extrusion", "Extrusion6", "+"],
  ["extrusion", "Extrusion7", "+"],
  ["point", "Work Point1", ""],
  ["point", "Work Point2", ""],
  ["plane", "Work Plane1", "+"],
  ["plane", "Work Plane2", "+"],
  ["mirror", "Mirror1", "+"],
  ["extrusion", "Extrusion8", "+"],
  ["point", "Work Point8", ""],
  ["point", "Work Point9", ""],
  ["extrusion", "Extrusion9", "+"],
  ["extrusion", "Extrusion10", "+"],
  ["plane", "Work Plane5", "+"],
  ["sketch", "Sketch10", ""],
  ["extrusion", "Extrusion11", "+"],
  ["planePin", "Work Plane8", ""],
  ["planePin", "Work Plane9", ""],
  ["extrusion", "Extrusion12", "+"],
  ["mirror", "Mirror3", "+"],
  ["extrusion", "Extrusion13", "+"],
  ["extrusion", "Extrusion14", "+"],
  ["plane", "Work Plane6", ""],
  ["extrusion", "Extrusion15", "+"],
  ["extrusion", "Extrusion16", "+"],
  ["extrusion", "Extrusion17", "+"],
  ["chamfer", "Chamfer1", ""],
];

const TreeLines = ({ mark, child }: { mark: string; child?: boolean }) => (
  <svg width={child ? 35 : 19} height="20" className="block shrink-0" aria-hidden="true">
    <path d="M9.500 0V20" stroke="#8d929b" strokeDasharray="1 1" />
    {child ? <path d="M25.500 0V10.500H35" fill="none" stroke="#8d929b" strokeDasharray="1 1" /> : <path d="M10 10.500H18" stroke="#8d929b" strokeDasharray="1 1" />}
    {mark && <rect x="4" y="4" width="11" height="11" fill="#3b4453" />}
    {mark && <path d={mark === "+" ? "M5 9H13M9 5V13" : "M5 9H13"} stroke={mark === "+" ? "#c5cad3" : "#fff"} strokeWidth="2" />}
  </svg>
);

const ModelBrowser = () => (
  <aside className="flex w-[292px] shrink-0 flex-col border-r border-l-4 border-r-[#222831] border-l-[#1b2028] bg-[#3b4453] font-['DejaVu_Sans_Condensed','DejaVu_Sans',sans-serif] text-[11px] text-gray-100">
    <div className="flex h-6 shrink-0 items-center bg-[#222831]">
      <div className="flex h-full w-[58px] items-center justify-between bg-[#3b4453] pr-[7px] pl-[3px]">
        <button type="button" className="font-['Liberation_Sans',sans-serif] text-white">Model</button>
        <button type="button" aria-label="Close Model"><Cross /></button>
      </div>
      <button type="button" aria-label="Add panel" className="ml-[5px]"><Plus /></button>
      <button type="button" aria-label="Search browser" className="ml-auto">
        <Svg w={14} h={14}><circle cx="6" cy="6" r="5" stroke="#8f8f93" strokeWidth="1.500" /><path d="M10 10L13.500 13.500" stroke="#8f8f93" strokeWidth="2" /></Svg>
      </button>
      <button type="button" aria-label="Panel menu" className="mr-1 ml-2"><Burger /></button>
    </div>
    <div className="flex min-h-0 flex-1">
      <ul className="min-w-0 flex-1 overflow-hidden pt-[2px]">
        <li className="flex h-5 items-center gap-[3px] pl-1">
          <Svg w={14} h={14}><path d="M0 3L4 0H14V10L11 14H0Z" fill="#5aa9e0" /><path d="M0 3H11V14H0Z" fill="#8ccbff" /><path d="M0 3L4 0H14L11 3Z" fill="#b6dfff" /></Svg>
          <span className="pt-[2px]">BLOWER - NICOTRA RDH 355 K</span>
        </li>
        {rows.map(([icon, label, mark, child]) => (
          <li key={label} className={`flex h-5 items-center whitespace-nowrap ${icon === "dimOff" ? "text-[#757a82]" : ""}`}>
            <TreeLines mark={mark} child={child} />
            <Svg>{treeIcons[icon]}</Svg>
            <span className="pt-[2px] pl-[2px]">{label}</span>
          </li>
        ))}
        <li className="flex h-5"><TreeLines mark="" /></li>
      </ul>
      <div className="flex w-[17px] shrink-0 flex-col items-center bg-[#373d48]">
        <button type="button" aria-label="Scroll up" className="flex h-[18px] w-full items-center justify-center bg-[#323843]">
          <Svg w={8} h={5}><path d="M.5 4.500L4 1L7.500 4.500" stroke="#8b919b" strokeWidth="1.500" /></Svg>
        </button>
        <div className="h-[506px] w-full bg-[#565f6d]" />
        <button type="button" aria-label="Scroll down" className="mt-auto flex h-[18px] w-full items-center justify-center">
          <Svg w={8} h={5}><path d="M.5 .5L4 4L7.500 .5" stroke="#8b919b" strokeWidth="1.500" /></Svg>
        </button>
      </div>
    </div>
  </aside>
);

export default function App() {
  return (
    <div className="flex h-screen flex-col overflow-hidden bg-[#3b4453] font-['Roboto',sans-serif]">
      <TitleBar />
      <RibbonTabs />
      <Ribbon />
      <div className="flex min-h-0 flex-1">
        <PropertiesPanel />
        <Viewport />
        <ModelBrowser />
      </div>
      <footer className="shrink-0">
        <div className="flex h-[23px] items-center justify-between bg-[#2f343f] text-[12px] text-gray-100">
          <span className="pt-px pl-[2px]">Ready</span>
          <div className="flex h-[21px] self-end">
            <span className="flex w-10 items-center border-l border-gray-200 pl-[9px]">1</span>
            <span className="flex w-[39px] items-center border-x border-gray-200 pl-[7px]">1</span>
          </div>
        </div>
        <div className="flex h-[2px] bg-[#1a171c]">
          <span className="ml-12 w-72 bg-gray-200" />
          <span className="ml-[247px] w-12 bg-[#55585f]" />
        </div>
      </footer>
    </div>
  );
}
